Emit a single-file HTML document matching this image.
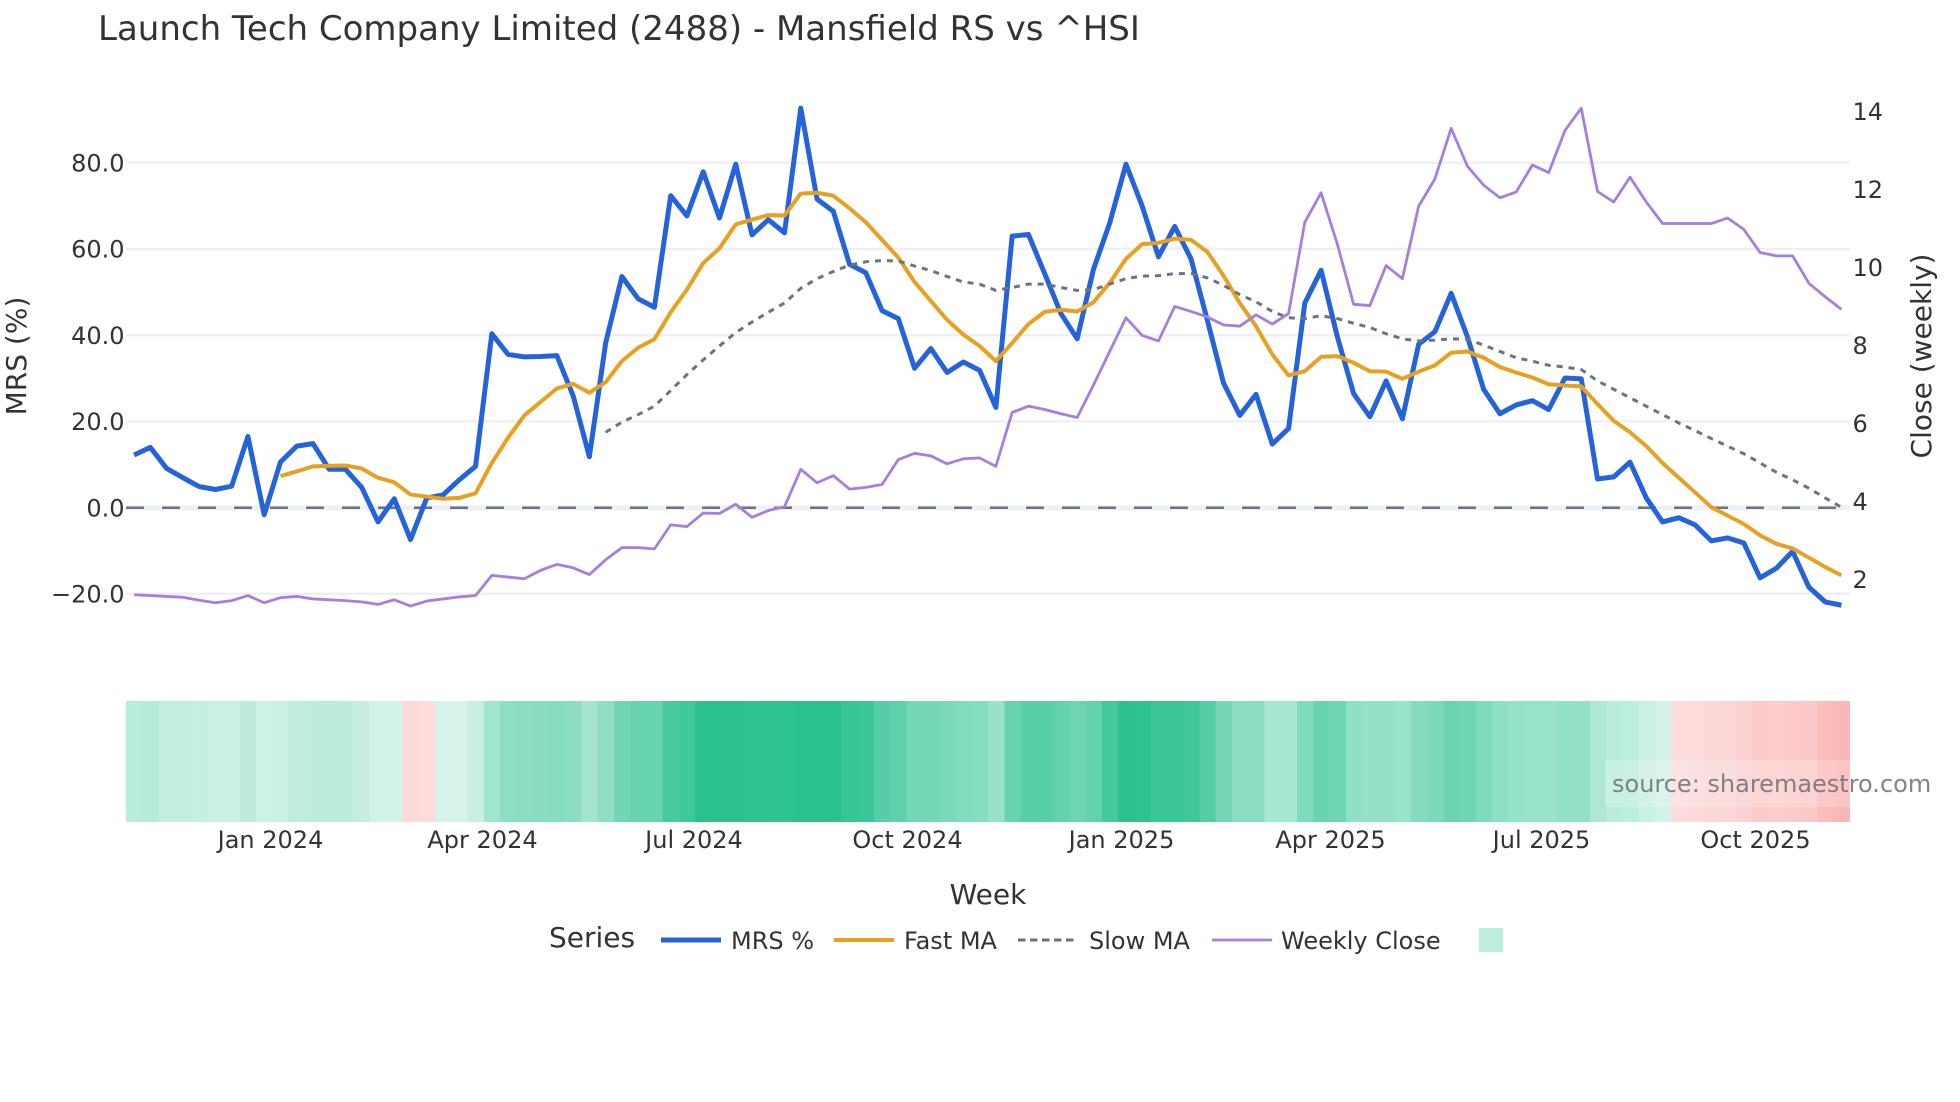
<!DOCTYPE html>
<html lang="en">
<head>
<meta charset="utf-8">
<title>Launch Tech Company Limited (2488) - Mansfield RS vs ^HSI</title>
<style>
html,body{margin:0;padding:0;background:#fff;width:1960px;height:1102px;overflow:hidden}
svg{display:block}
text{font-family:"DejaVu Sans",sans-serif;fill:#333}
.ax{font-size:24px}
.t{font-size:28px}
.l{fill:none;stroke-linejoin:round;stroke-linecap:butt;vector-effect:non-scaling-stroke}
</style>
</head>
<body>
<svg width="1960" height="1102" viewBox="0 0 1960 1102" xmlns="http://www.w3.org/2000/svg">
<rect width="1960" height="1102" fill="#fff"/>
<text x="98" y="40" font-size="34">Launch Tech Company Limited (2488) - Mansfield RS vs ^HSI</text>

<g stroke="#eef0f4" stroke-width="2.5">
<line x1="126" x2="1850" y1="162.8" y2="162.8"/>
<line x1="126" x2="1850" y1="249" y2="249"/>
<line x1="126" x2="1850" y1="335.2" y2="335.2"/>
<line x1="126" x2="1850" y1="421.4" y2="421.4"/>
<line x1="126" x2="1850" y1="593.8" y2="593.8"/>
</g>
<line x1="126" x2="1850" y1="507.7" y2="507.7" stroke="#eef0f8" stroke-width="5"/>
<line x1="126" x2="1850" y1="507.7" y2="507.7" stroke="#6b7280" stroke-width="2.5" stroke-dasharray="18 18"/>

<g class="ax" text-anchor="end">
<text x="124.5" y="171.5">80.0</text>
<text x="124.5" y="257.7">60.0</text>
<text x="124.5" y="343.9">40.0</text>
<text x="124.5" y="430.1">20.0</text>
<text x="124.5" y="516.3">0.0</text>
<text x="124.5" y="602.5">−20.0</text>
</g>
<g class="ax">
<text x="1852.5" y="120">14</text>
<text x="1852.5" y="198">12</text>
<text x="1852.5" y="276">10</text>
<text x="1852.5" y="354">8</text>
<text x="1852.5" y="432">6</text>
<text x="1852.5" y="510">4</text>
<text x="1852.5" y="588">2</text>
</g>
<text class="t" text-anchor="middle" transform="translate(26 356) rotate(-90)">MRS (%)</text>
<text class="t" text-anchor="middle" transform="translate(1931 356) rotate(-90)">Close (weekly)</text>

<g transform="translate(126 701) scale(16.264 121)" shape-rendering="crispEdges">
<rect x="0" width="1.03" height="1" fill="#b9ecda"/>
<rect x="1" width="1.03" height="1" fill="#b7ebd9"/>
<rect x="2" width="1.03" height="1" fill="#c0eee0"/>
<rect x="3" width="1.03" height="1" fill="#c1eee0"/>
<rect x="4" width="1.03" height="1" fill="#c6efe3"/>
<rect x="5" width="1.03" height="1" fill="#c9f0e5"/>
<rect x="6" width="1.03" height="1" fill="#c9f0e5"/>
<rect x="7" width="1.03" height="1" fill="#bfebdd"/>
<rect x="8" width="1.03" height="1" fill="#cff2e8"/>
<rect x="9" width="1.03" height="1" fill="#c8f0e4"/>
<rect x="10" width="1.03" height="1" fill="#bfeedd"/>
<rect x="11" width="1.03" height="1" fill="#bcedDc"/>
<rect x="12" width="1.03" height="1" fill="#bbecdb"/>
<rect x="13" width="1.03" height="1" fill="#bcecdb"/>
<rect x="14" width="1.03" height="1" fill="#c8ecdf"/>
<rect x="15" width="1.03" height="1" fill="#d2f3e9"/>
<rect x="16" width="1.03" height="1" fill="#d2f3e9"/>
<rect x="17" width="1.03" height="1" fill="#fdd9da"/>
<rect x="18" width="1.03" height="1" fill="#fddcdc"/>
<rect x="19" width="1.03" height="1" fill="#d6f4ec"/>
<rect x="20" width="1.03" height="1" fill="#d6f4ec"/>
<rect x="21" width="1.03" height="1" fill="#c9eee4"/>
<rect x="22" width="1.03" height="1" fill="#a0e6cf"/>
<rect x="23" width="1.03" height="1" fill="#8cdfc3"/>
<rect x="24" width="1.03" height="1" fill="#8addc0"/>
<rect x="25" width="1.03" height="1" fill="#88dcbf"/>
<rect x="26" width="1.03" height="1" fill="#85dcbf"/>
<rect x="27" width="1.03" height="1" fill="#8cdec2"/>
<rect x="28" width="1.03" height="1" fill="#a5e5d0"/>
<rect x="29" width="1.03" height="1" fill="#8ddec3"/>
<rect x="30" width="1.03" height="1" fill="#70d6b5"/>
<rect x="31" width="1.03" height="1" fill="#69d3b1"/>
<rect x="32" width="1.03" height="1" fill="#68d3b1"/>
<rect x="33" width="1.03" height="1" fill="#48caa0"/>
<rect x="34" width="1.03" height="1" fill="#40c89b"/>
<rect x="35" width="1.03" height="1" fill="#2bc18e"/>
<rect x="36" width="1.03" height="1" fill="#2dc18f"/>
<rect x="37" width="1.03" height="1" fill="#2cc18f"/>
<rect x="38" width="1.03" height="1" fill="#2dc28f"/>
<rect x="39" width="1.03" height="1" fill="#30c392"/>
<rect x="40" width="1.03" height="1" fill="#30c392"/>
<rect x="41" width="1.03" height="1" fill="#2bc18e"/>
<rect x="42" width="1.03" height="1" fill="#2bc18e"/>
<rect x="43" width="1.03" height="1" fill="#2cc18e"/>
<rect x="44" width="1.03" height="1" fill="#36c596"/>
<rect x="45" width="1.03" height="1" fill="#3ac698"/>
<rect x="46" width="1.03" height="1" fill="#56cda8"/>
<rect x="47" width="1.03" height="1" fill="#5ed0ac"/>
<rect x="48" width="1.03" height="1" fill="#74d8b8"/>
<rect x="49" width="1.03" height="1" fill="#74d8b8"/>
<rect x="50" width="1.03" height="1" fill="#7ad9ba"/>
<rect x="51" width="1.03" height="1" fill="#82dbbe"/>
<rect x="52" width="1.03" height="1" fill="#85dcc0"/>
<rect x="53" width="1.03" height="1" fill="#98e2ca"/>
<rect x="54" width="1.03" height="1" fill="#69d3b1"/>
<rect x="55" width="1.03" height="1" fill="#58cfa9"/>
<rect x="56" width="1.03" height="1" fill="#58cfa9"/>
<rect x="57" width="1.03" height="1" fill="#63d1ae"/>
<rect x="58" width="1.03" height="1" fill="#70d3b4"/>
<rect x="59" width="1.03" height="1" fill="#62d1ae"/>
<rect x="60" width="1.03" height="1" fill="#44c99e"/>
<rect x="61" width="1.03" height="1" fill="#2cc18e"/>
<rect x="62" width="1.03" height="1" fill="#2dc28f"/>
<rect x="63" width="1.03" height="1" fill="#3ac698"/>
<rect x="64" width="1.03" height="1" fill="#3ac698"/>
<rect x="65" width="1.03" height="1" fill="#3fc79b"/>
<rect x="66" width="1.03" height="1" fill="#55cda7"/>
<rect x="67" width="1.03" height="1" fill="#77d5b8"/>
<rect x="68" width="1.03" height="1" fill="#8bddc2"/>
<rect x="69" width="1.03" height="1" fill="#8cdec3"/>
<rect x="70" width="1.03" height="1" fill="#a5e7d2"/>
<rect x="71" width="1.03" height="1" fill="#a5e7d2"/>
<rect x="72" width="1.03" height="1" fill="#80dabc"/>
<rect x="73" width="1.03" height="1" fill="#69d3b1"/>
<rect x="74" width="1.03" height="1" fill="#6fd6b4"/>
<rect x="75" width="1.03" height="1" fill="#8fe0c5"/>
<rect x="76" width="1.03" height="1" fill="#93e1c8"/>
<rect x="77" width="1.03" height="1" fill="#93e1c8"/>
<rect x="78" width="1.03" height="1" fill="#9be4cc"/>
<rect x="79" width="1.03" height="1" fill="#84dbbf"/>
<rect x="80" width="1.03" height="1" fill="#7adabb"/>
<rect x="81" width="1.03" height="1" fill="#6ad4b2"/>
<rect x="82" width="1.03" height="1" fill="#6fd6b4"/>
<rect x="83" width="1.03" height="1" fill="#7fdabb"/>
<rect x="84" width="1.03" height="1" fill="#8fdfc5"/>
<rect x="85" width="1.03" height="1" fill="#97e2ca"/>
<rect x="86" width="1.03" height="1" fill="#99e3cb"/>
<rect x="87" width="1.03" height="1" fill="#99e3cb"/>
<rect x="88" width="1.03" height="1" fill="#93e1c8"/>
<rect x="89" width="1.03" height="1" fill="#92e1c7"/>
<rect x="90" width="1.03" height="1" fill="#aee8d4"/>
<rect x="91" width="1.03" height="1" fill="#b9ecdb"/>
<rect x="92" width="1.03" height="1" fill="#bdeddd"/>
<rect x="93" width="1.03" height="1" fill="#c8f0e4"/>
<rect x="94" width="1.03" height="1" fill="#d3f3ea"/>
<rect x="95" width="1.03" height="1" fill="#fddcdc"/>
<rect x="96" width="1.03" height="1" fill="#fddadb"/>
<rect x="97" width="1.03" height="1" fill="#fad8d8"/>
<rect x="98" width="1.03" height="1" fill="#fbd6d6"/>
<rect x="99" width="1.03" height="1" fill="#fbd0d1"/>
<rect x="100" width="1.03" height="1" fill="#fdcbcb"/>
<rect x="101" width="1.03" height="1" fill="#fdcccc"/>
<rect x="102" width="1.03" height="1" fill="#fccaca"/>
<rect x="103" width="1.03" height="1" fill="#fcc8c9"/>
<rect x="104" width="1.03" height="1" fill="#fbbcbc"/>
<rect x="105" width="1" height="1" fill="#fab7b7"/>
</g>

<g transform="translate(134.1 0) scale(16.26 0.4209)">
<polyline class="l" stroke="#2563da" stroke-width="5" points="0,1081 1,1063 2,1113 3,1135 4,1156 5,1163 6,1155 7,1037 8,1223 9,1098 10,1060 11,1054 12,1115 13,1115 14,1158 15,1240 16,1185 17,1282 18,1183 19,1176 20,1140 21,1108 22,793 23,842 24,848 25,847 26,845 27,940 28,1085 29,815 30,657 31,710 32,730 33,465 34,513 35,408 36,518 37,390 38,558 39,522 40,553 41,257 42,473 43,502 44,628 45,648 46,738 47,757 48,875 49,828 50,885 51,860 52,880 53,968 54,561 55,557 56,650 57,745 58,805 59,640 60,530 61,390 62,490 63,610 64,538 65,615 66,760 67,910 68,987 69,937 70,1055 71,1018 72,720 73,642 74,800 75,935 76,990 77,905 78,995 79,818 80,788 81,697 82,800 83,925 84,983 85,962 86,952 87,973 88,898 89,900 90,1138 91,1133 92,1098 93,1183 94,1240 95,1230 96,1247 97,1285 98,1278 99,1290 100,1373 101,1350 102,1310 103,1395 104,1430 105,1438"/>
<polyline class="l" stroke="#e8a020" stroke-width="4" points="9,1131 10,1120 11,1108 12,1107 13,1106 14,1113 15,1135 16,1146 17,1175 18,1180 19,1185 20,1183 21,1172 22,1100 23,1040 24,987 25,955 26,923 27,912 28,933 29,908 30,858 31,826 32,806 33,742 34,688 35,625 36,590 37,533 38,522 39,511 40,512 41,460 42,458 43,465 44,495 45,528 46,570 47,612 48,670 49,715 50,760 51,795 52,822 53,858 54,815 55,770 56,741 57,736 58,740 59,718 60,672 61,615 62,580 63,577 64,567 65,570 66,598 67,655 68,720 69,775 70,842 71,892 72,882 73,848 74,846 75,862 76,882 77,883 78,900 79,883 80,868 81,838 82,835 83,850 84,872 85,885 86,897 87,913 88,916 89,918 90,960 91,1000 92,1027 93,1060 94,1100 95,1135 96,1170 97,1205 98,1225 99,1245 100,1272 101,1292 102,1303 103,1325 104,1347 105,1367"/>
<polyline class="l" stroke="#6b7280" stroke-width="3" stroke-dasharray="6 6" points="29,1027 30,1003 31,985 32,965 33,928 34,890 35,855 36,822 37,790 38,765 39,742 40,720 41,685 42,662 43,645 44,630 45,622 46,619 47,620 48,632 49,643 50,657 51,670 52,675 53,690 54,683 55,675 56,675 57,683 58,690 59,688 60,675 61,662 62,656 63,655 64,650 65,650 66,660 67,678 68,700 69,717 70,740 71,755 72,757 73,750 74,757 75,768 76,778 77,793 78,805 79,810 80,808 81,805 82,806 83,820 84,835 85,850 86,858 87,868 88,872 89,878 90,905 91,925 92,945 93,965 94,985 95,1005 96,1023 97,1042 98,1060 99,1078 100,1100 101,1122 102,1140 103,1160 104,1183 105,1205"/>
<polyline class="l" stroke="#a47fde" stroke-width="2.8" points="0,1413 1,1415 2,1417 3,1419 4,1426 5,1432 6,1427 7,1415 8,1432 9,1420 10,1417 11,1423 12,1425 13,1427 14,1430 15,1436 16,1425 17,1440 18,1428 19,1423 20,1418 21,1415 22,1367 23,1371 24,1375 25,1355 26,1341 27,1349 28,1365 29,1330 30,1301 31,1301 32,1304 33,1247 34,1251 35,1219 36,1220 37,1198 38,1229 39,1213 40,1204 41,1115 42,1147 43,1130 44,1162 45,1158 46,1151 47,1092 48,1077 49,1083 50,1102 51,1090 52,1088 53,1108 54,980 55,965 56,973 57,983 58,992 59,915 60,835 61,755 62,797 63,810 64,728 65,740 66,753 67,772 68,775 69,748 70,770 71,745 72,528 73,458 74,580 75,723 76,726 77,631 78,662 79,490 80,425 81,305 82,395 83,440 84,470 85,456 86,392 87,410 88,310 89,257 90,455 91,480 92,421 93,480 94,531 95,531 96,531 97,531 98,518 99,545 100,600 101,608 102,608 103,673 104,705 105,735"/>
</g>

<g class="ax" text-anchor="middle">
<text x="270.5" y="848">Jan 2024</text>
<text x="482.5" y="848">Apr 2024</text>
<text x="694" y="848">Jul 2024</text>
<text x="907.5" y="848">Oct 2024</text>
<text x="1121.5" y="848">Jan 2025</text>
<text x="1330.5" y="848">Apr 2025</text>
<text x="1541.5" y="848">Jul 2025</text>
<text x="1755.5" y="848">Oct 2025</text>
</g>
<text class="t" x="988" y="904" text-anchor="middle" style="font-size:28px">Week</text>

<text class="t" x="549" y="947">Series</text>
<line x1="661" x2="721" y1="940" y2="940" stroke="#2563da" stroke-width="5"/>
<text class="ax" x="731" y="949">MRS %</text>
<line x1="834" x2="894" y1="940" y2="940" stroke="#e8a020" stroke-width="4"/>
<text class="ax" x="904" y="949">Fast MA</text>
<line x1="1018" x2="1075" y1="940" y2="940" stroke="#6b7280" stroke-width="3" stroke-dasharray="7.5 4.5"/>
<text class="ax" x="1089" y="949">Slow MA</text>
<line x1="1212" x2="1272" y1="940" y2="940" stroke="#a47fde" stroke-width="2.8"/>
<text class="ax" x="1281" y="949">Weekly Close</text>
<rect x="1479" y="928" width="24" height="24" fill="#bdeddc"/>

<rect x="1605" y="760" width="245" height="47" fill="#fff" fill-opacity="0.2"/>
<text class="ax" x="1612" y="792" style="fill:#6f6f6f" fill-opacity="0.85">source: sharemaestro.com</text>
</svg>
</body>
</html>
